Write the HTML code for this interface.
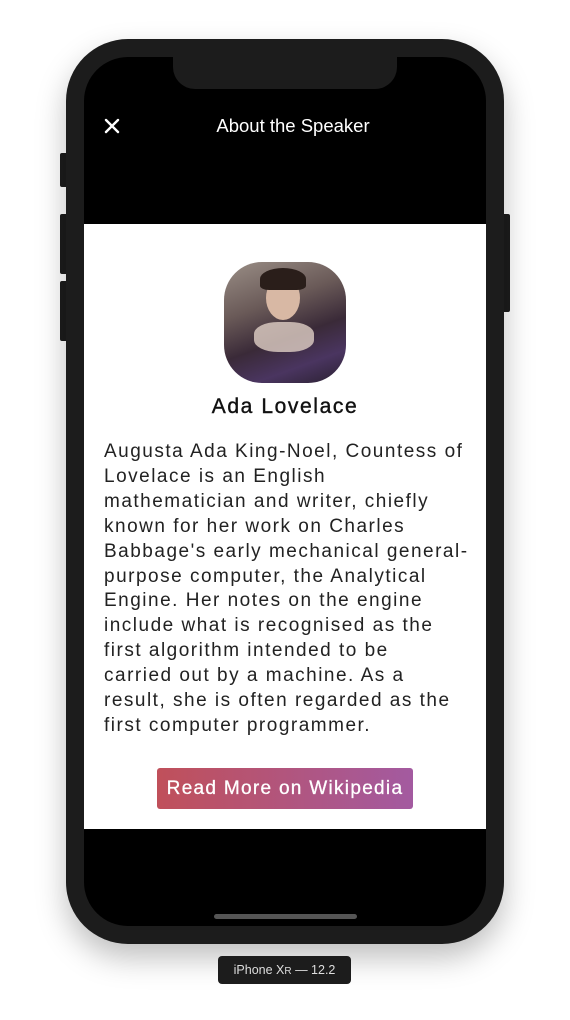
<!DOCTYPE html>
<html><head><meta charset="utf-8"><style>
body{margin:0;width:570px;height:1020px;background:#fff;position:relative;overflow:hidden;font-family:"Liberation Sans",sans-serif}
.abs{position:absolute}
.phone{left:66px;top:39px;width:438px;height:905px;background:#1c1c1c;border-radius:62px;box-shadow:0 14px 30px rgba(0,0,0,.25)}
.screen{left:84px;top:57px;width:402px;height:869px;background:#000;border-radius:44px;overflow:hidden}
.btn{background:#1c1c1c;border-radius:2px}
</style></head><body>
<div class="abs btn" style="left:60px;top:153px;width:8px;height:34px"></div>
<div class="abs btn" style="left:60px;top:214px;width:8px;height:60px"></div>
<div class="abs btn" style="left:60px;top:281px;width:8px;height:60px"></div>
<div class="abs btn" style="left:502px;top:214px;width:8px;height:98px"></div>
<div class="abs phone"></div>
<div class="abs screen">
  <div class="abs" style="left:89px;top:0;width:224px;height:32px;background:#1c1c1c;border-radius:0 0 22px 22px"></div>
  <svg class="abs" style="left:20px;top:61px" width="16" height="16"><path d="M2 2L14 14M14 2L2 14" stroke="#fff" stroke-width="2.4" stroke-linecap="round"/></svg>
  <div class="abs" style="left:0;width:402px;top:58px;text-align:center;color:#fff;font-size:18.5px;padding-left:16px;box-sizing:border-box">About the Speaker</div>
  <div class="abs" style="left:0;top:167px;width:402px;height:605px;background:#fff">
    <div class="abs" style="left:140px;top:38px;width:122px;height:121px;border-radius:38px;background:linear-gradient(160deg,#9a8e86 0%,#6a5a58 35%,#3a2a38 60%,#4a3560 80%,#2a2030 100%);overflow:hidden">
      <div class="abs" style="left:42px;top:14px;width:34px;height:44px;border-radius:50%;background:#d8b8a4"></div>
      <div class="abs" style="left:36px;top:6px;width:46px;height:22px;border-radius:50% 50% 20% 20%;background:#2a1e1a"></div>
      <div class="abs" style="left:30px;top:60px;width:60px;height:30px;border-radius:40%;background:#e0cfc6;opacity:.8"></div>
    </div>
    <div class="abs" style="left:0;width:402px;top:171px;text-align:center;font-size:21px;letter-spacing:1.6px;color:#111;-webkit-text-stroke:0.4px #111">Ada Lovelace</div>
    <div class="abs" style="left:20px;top:216px;width:380px;white-space:nowrap;font-size:19px;line-height:24.9px;color:#222;letter-spacing:1.5px">Augusta Ada King-Noel, Countess of<br>Lovelace is an English<br>mathematician and writer, chiefly<br>known for her work on Charles<br>Babbage's early mechanical general-<br>purpose computer, the Analytical<br>Engine. Her notes on the engine<br>include what is recognised as the<br>first algorithm intended to be<br>carried out by a machine. As a<br>result, she is often regarded as the<br>first computer programmer.</div>
    <div class="abs" style="left:73px;top:544px;width:256px;height:41px;border-radius:3px;background:linear-gradient(90deg,#c0505a,#a35aa0);color:#fff;font-size:19px;line-height:41px;text-align:center;letter-spacing:1.3px;-webkit-text-stroke:0.3px #fff">Read More on Wikipedia</div>
  </div>
  <div class="abs" style="left:130px;top:857px;width:143px;height:5px;border-radius:3px;background:#555"></div>
</div>
<div class="abs" style="left:218px;top:956px;width:133px;height:28px;background:#1c1c1c;border-radius:4px;color:#ddd;font-size:12.5px;line-height:28px;text-align:center">iPhone X<span style="font-size:10px">R</span> — 12.2</div>
</body></html>
